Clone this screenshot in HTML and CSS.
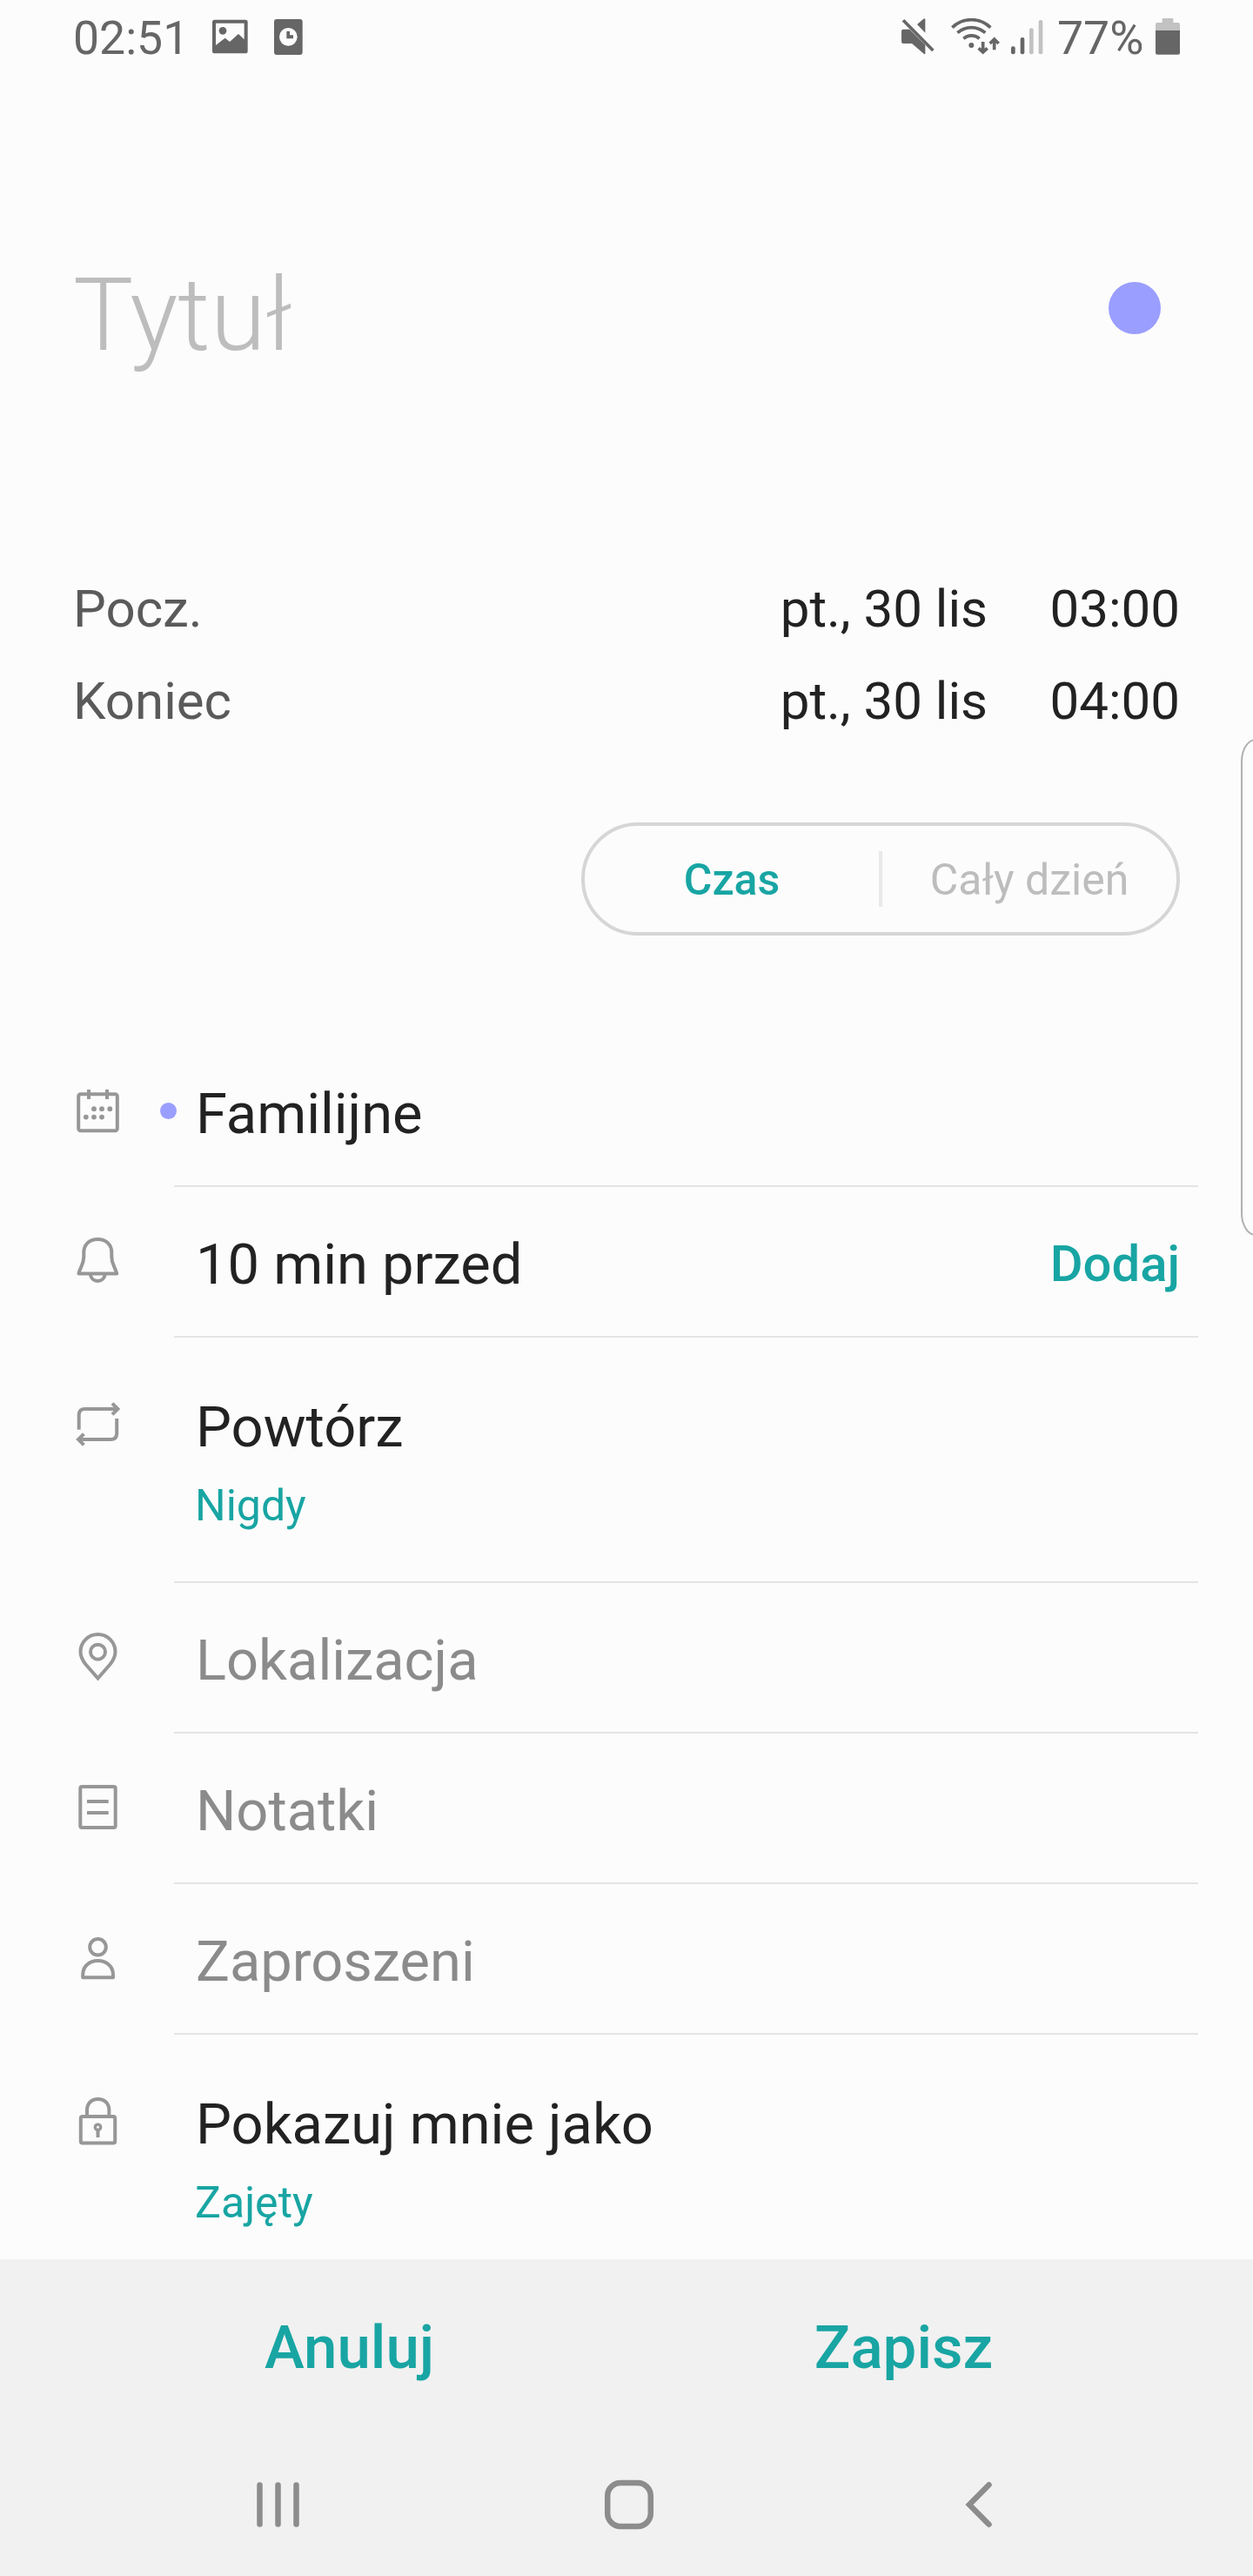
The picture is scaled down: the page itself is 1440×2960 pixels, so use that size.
FILE: index.html
```html
<!DOCTYPE html>
<html lang="pl">
<head>
  <meta charset="UTF-8">
  <meta name="viewport" content="width=device-width, initial-scale=1.0">
  <title>Nowe wydarzenie</title>
  <link rel="stylesheet" href="styles.css">
</head>
<body>
  <header class="status-bar">
    <span class="clock">02:51</span>
    <svg class="s-image" width="41" height="42" viewBox="0 0 123 126">
      <path fill-rule="evenodd" d="M8 5H114Q122 5 122 13V113Q122 121 114 121H8Q0 121 0 113V13Q0 5 8 5ZM12 17V93L44 68L60 81L90 54L110 73V17Z"/>
      <circle cx="36" cy="43" r="13"/>
    </svg>
    <svg class="s-alarm" width="33" height="42" viewBox="0 0 99 126">
      <rect y="3" width="98" height="123" rx="9"/>
      <circle cx="49" cy="64" r="31" fill="#fcfcfc"/>
      <path d="M43 45H54V58H66V70H43Z"/>
    </svg>
    <svg class="s-mute" width="38" height="42" viewBox="0 0 114 126">
      <path d="M6 38H28L82 92V120Q82 126 77 122L36 87H6Q0 87 0 81V44Q0 38 6 38ZM54 21L76 2Q82 -2 82 4V50Z"/>
      <path d="M6 7L109 111" stroke="#666" stroke-width="11"/>
    </svg>
    <svg class="s-wifi" width="56" height="42" viewBox="0 0 168 126">
      <g fill="none" stroke="#666" stroke-width="11">
        <path d="M4 32A94 94 0 0 1 136 32M22 50A72 72 0 0 1 118 50M43 70A42 42 0 0 1 98 70"/>
        <path d="M110 81V115M95 103L110 117L125 103M149 109V74M134 87L149 72L164 87"/>
      </g>
      <circle cx="70" cy="93" r="9"/>
    </svg>
    <svg class="s-signal" width="37" height="42" viewBox="0 0 111 126">
      <rect x="0" y="97" width="14" height="27" rx="6"/>
      <rect x="32" y="66" width="14" height="58" rx="6"/>
      <rect x="63" y="34" width="14" height="90" rx="6" fill="#c2c2c2"/>
      <rect x="95" y="6" width="14" height="118" rx="6" fill="#c2c2c2"/>
    </svg>
    <span class="percent">77%</span>
    <svg width="28" height="42" viewBox="0 0 84 126">
      <path fill="#c2c2c2" d="M23 15V3Q23 -1 27 -1H57Q61 -1 61 3V15H78Q84 15 84 21V44H0V21Q0 15 6 15Z"/>
      <path d="M0 42H84V119Q84 125 78 125H6Q0 125 0 119Z"/>
    </svg>
  </header>

  <section class="title">
    <h1>Tytuł</h1>
    <span class="color-dot"></span>
  </section>

  <section class="dates">
    <div class="date-row"><span class="label">Pocz.</span><span>pt., 30 lis</span><span class="hour">03:00</span></div>
    <div class="date-row"><span class="label">Koniec</span><span>pt., 30 lis</span><span class="hour">04:00</span></div>
  </section>

  <div class="switch">
    <button class="active">Czas</button>
    <button>Cały dzień</button>
  </div>

  <main class="options">
    <div class="row">
      <div class="icon">
        <svg width="56" height="60" viewBox="0 0 56 60">
          <rect x="6.2" y="12.2" width="44.6" height="42" rx="2.5"/>
          <path d="M18 7V18M39 7V18"/>
          <g class="fill">
            <circle cx="24" cy="29.2" r="2.9"/><circle cx="33" cy="29.2" r="2.9"/><circle cx="42.3" cy="29.2" r="2.9"/>
            <circle cx="14.8" cy="38.6" r="2.9"/><circle cx="24" cy="38.6" r="2.9"/><circle cx="33" cy="38.6" r="2.9"/>
          </g>
        </svg>
        <span class="calendar-dot"></span>
      </div>
      <div class="text"><p>Familijne</p></div>
    </div>

    <div class="row">
      <div class="icon">
        <svg width="56" height="60" viewBox="0 0 56 60">
          <path d="M28.3 6C18.3 6 12.3 12.5 12.3 21V26C12.3 35 8.5 37 6.4 45.4H50.2C48.1 37 44.3 35 44.3 26V21C44.3 12.5 38.3 6 28.3 6Z" stroke-linejoin="round"/>
          <path d="M19.8 46C20.3 51 24 54 28.3 54S36.3 51 36.8 46"/>
        </svg>
      </div>
      <div class="text with-action"><p>10 min przed</p><button class="add">Dodaj</button></div>
    </div>

    <div class="row tall">
      <div class="icon">
        <svg width="56" height="60" viewBox="0 0 56 60">
          <path d="M6.7 37.7V21Q6.7 14 13.7 14H51M45 7.6L51.4 14L45 20.4"/>
          <path d="M50.2 25V42Q50.2 49 43.2 49H6M12.4 42.6L6 49L12.4 55.4"/>
        </svg>
      </div>
      <div class="text"><p>Powtórz</p><small>Nigdy</small></div>
    </div>

    <div class="row empty">
      <div class="icon">
        <svg width="56" height="60" viewBox="0 0 56 60">
          <path d="M28.5 55.5L14.5 39.5C10.5 34.5 8.5 30.5 8.5 25A20 20 0 0 1 48.5 25C48.5 30.5 46.5 34.5 42.5 39.5Z"/>
          <circle cx="28.5" cy="25.2" r="8.5"/>
        </svg>
      </div>
      <div class="text"><p>Lokalizacja</p></div>
    </div>

    <div class="row empty">
      <div class="icon">
        <svg width="56" height="60" viewBox="0 0 56 60">
          <rect x="8.3" y="7" width="40.4" height="47" rx="2"/>
          <path d="M16 24H40.7M16 37H40.7"/>
        </svg>
      </div>
      <div class="text"><p>Notatki</p></div>
    </div>

    <div class="row empty">
      <div class="icon">
        <svg width="56" height="60" viewBox="0 0 56 60">
          <circle cx="28.5" cy="18.3" r="9.3"/>
          <path d="M11.2 53.3V50C11.2 40.5 18.5 34 28.5 34S46 40.5 46 50V53.3Z" stroke-linejoin="round"/>
        </svg>
      </div>
      <div class="text"><p>Zaproszeni</p></div>
    </div>

    <div class="row tall">
      <div class="icon">
        <svg width="56" height="60" viewBox="0 0 56 60">
          <rect x="8.8" y="26" width="39.4" height="30.6" rx="2"/>
          <path d="M16 26V19C16 11 21 6 28.6 6S41.4 11 41.4 19V26"/>
          <circle cx="28.5" cy="38.3" r="3.2" stroke-width="3.4"/>
          <path d="M28.5 42V50"/>
        </svg>
      </div>
      <div class="text"><p>Pokazuj mnie jako</p><small>Zajęty</small></div>
    </div>
  </main>

  <footer>
    <div class="actions">
      <button>Anuluj</button>
      <button>Zapisz</button>
    </div>
    <nav>
      <svg width="60" height="60" viewBox="0 0 60 60"><path d="M8.5 7.5V52.5M29.5 7.5V52.5M50.5 7.5V52.5"/></svg>
      <svg width="60" height="60" viewBox="0 0 60 60"><rect x="5.2" y="5" width="49.6" height="50" rx="15"/></svg>
      <svg width="60" height="60" viewBox="0 0 60 60"><path d="M41.5 7.3L19 30L41.5 52.7"/></svg>
    </nav>
  </footer>

  <div class="edge-handle"></div>
</body>
</html>
```
FILE: styles.css
```css
* {
  box-sizing: border-box;
}
body {
  position: relative;
  width: 1440px;
  height: 2960px;
  margin: 0;
  overflow: hidden;
  background-color: #fcfcfc;
  color: #222;
  font-family: Roboto, "Noto Sans", sans-serif;
}
h1, p {
  margin: 0;
  font-weight: 400;
}
button {
  padding: 0;
  border: none;
  background: none;
  font-family: inherit;
  color: #18a5a3;
}
svg {
  display: block;
  flex-shrink: 0;
}

/* status bar */
.status-bar {
  display: flex;
  align-items: center;
  height: 84px;
  padding: 0 84px;
  font-size: 53.5px;
  line-height: 84px;
  color: #666;
  fill: #666;
}
.clock {
  width: 160px;
  padding-top: 3px;
}
.s-alarm {
  margin-left: 30px;
}
.s-mute {
  margin-left: auto;
}
.s-wifi {
  margin-left: 19px;
}
.s-signal {
  margin: 0 16px 0 13px;
}
.percent {
  width: 113px;
  padding-top: 3px;
}

/* title */
.title {
  display: flex;
  justify-content: space-between;
  padding: 210px 106px 0 84px;
}
.title h1 {
  font-size: 116px;
  font-weight: 300;
  line-height: 136px;
  color: #bdbdbd;
}
.color-dot {
  width: 60px;
  height: 60px;
  margin-top: 30px;
  border-radius: 50%;
  background-color: #9a9eff;
}

/* start and end */
.dates {
  padding: 217px 84px 0;
}
.date-row {
  display: flex;
  height: 106px;
  font-size: 60px;
  line-height: 106px;
}
.label {
  margin-right: auto;
  color: #5a5a5a;
}
.hour {
  width: 152px;
  margin-left: 69px;
  text-align: right;
}
.switch {
  display: flex;
  align-items: center;
  width: 688px;
  height: 130px;
  margin: 86px 84px 0 auto;
  border: 4px solid #d6d6d6;
  border-radius: 65px;
}
.switch button {
  flex: 1;
  height: 64px;
  padding-top: 2px;
  font-size: 50px;
  line-height: 62px;
  color: #bdbdbd;
}
.switch .active {
  border-right: 4px solid #e9e9e9;
  font-weight: 500;
  color: #18a5a3;
}

/* options list */
.options {
  height: 1521px;
  padding-top: 116px;
}
.row {
  display: flex;
  height: 173px;
}
.icon {
  display: flex;
  width: 200px;
  padding: 54px 0 0 84px;
}
.icon svg {
  fill: none;
  stroke: #979797;
  stroke-width: 4;
}
.icon .fill {
  fill: #979797;
  stroke: none;
}
.calendar-dot {
  flex-shrink: 0;
  width: 19px;
  height: 19px;
  margin: 22px 0 0 44px;
  border-radius: 50%;
  background-color: #9a9eff;
}
.text {
  width: 1177px;
  padding: 51px 21px 0 25px;
  border-bottom: 2px solid #e4e4e4;
}
.text p {
  font-size: 65px;
  line-height: 76px;
}
.text small {
  display: block;
  margin: 22px 0 0 -1px;
  font-size: 50px;
  line-height: 60px;
  color: #18a5a3;
}
.with-action {
  display: flex;
  justify-content: space-between;
}
.add {
  height: 74px;
  font-size: 58px;
  font-weight: 500;
  line-height: 74px;
}
.tall {
  height: 282px;
}
.tall .icon {
  padding-top: 68px;
}
.tall .text {
  padding-top: 65px;
}
.row:last-child .text {
  border-bottom: none;
}
.empty p {
  color: #8b8b8b;
}

/* bottom buttons and navigation */
footer {
  position: relative;
  height: 364px;
  background-color: #f1f1f1;
}
.actions {
  display: flex;
  padding: 60px 83px 0;
}
.actions button {
  flex: 1;
  height: 84px;
  font-size: 69px;
  font-weight: 500;
  line-height: 84px;
}
nav {
  display: flex;
  justify-content: space-between;
  padding: 108px 285px 0 290px;
}
nav svg {
  fill: none;
  stroke: #8c8c8c;
  stroke-width: 6.5;
  stroke-linecap: round;
}

/* edge panel handle, hangs over the right side */
.edge-handle {
  position: absolute;
  top: 849px;
  right: -20px;
  width: 34px;
  height: 571px;
  border: 2px solid #b0b0b0;
  border-radius: 17px / 26px;
}
```
